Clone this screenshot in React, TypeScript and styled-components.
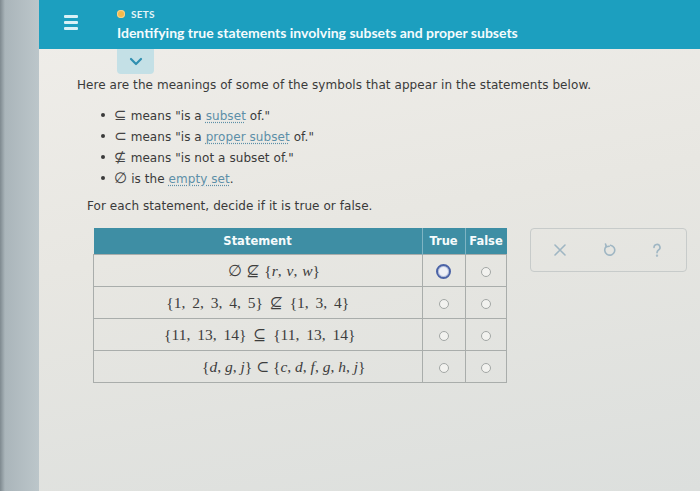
import React from 'react';
import styled, { createGlobalStyle } from 'styled-components';

const GlobalStyle = createGlobalStyle`
  html, body {
    margin: 0;
    padding: 0;
    background: #c3ccd0;
  }
`;

const Page = styled.div`
  display: flex;
  width: 700px;
  height: 491px;
  overflow: hidden;
`;

const Bezel = styled.div`
  width: 39px;
  flex-shrink: 0;
  background: linear-gradient(90deg, #7e898f 0px, #aab5ba 5px, #bcc6ca 100%);
`;

const Screen = styled.div`
  flex: 1;
  display: flex;
  flex-direction: column;
  background: linear-gradient(170deg, #f0eeea 0%, #e8e7e2 45%, #dcdfdd 100%);
`;

const Header = styled.header`
  height: 49px;
  background: #1c9fbf;
  display: flex;
  align-items: flex-start;
  padding-left: 25px;
  gap: 39px;
`;

const Hamburger = styled.div`
  display: flex;
  flex-direction: column;
  gap: 3px;
  margin-top: 15px;

  span {
    display: block;
    width: 14px;
    height: 3px;
    border-radius: 1px;
    background: #d9f1f6;
  }
`;

const TitleBlock = styled.div`
  display: flex;
  flex-direction: column;
  gap: 4px;
  padding-top: 8px;
`;

const Topic = styled.div`
  display: flex;
  align-items: center;
  gap: 6px;
  font-family: Lato, "Open Sans", sans-serif;
  font-weight: 700;
  font-size: 10px;
  letter-spacing: 0.3px;
  color: #e4f4f8;
`;

const Dot = styled.span`
  width: 8px;
  height: 8px;
  border-radius: 50%;
  background: #f5b94a;
  box-shadow: 0 0 0 1px #f7d38f inset;
`;

const Title = styled.h1`
  margin: 0;
  font-family: Lato, "Open Sans", sans-serif;
  font-weight: 700;
  font-size: 14px;
  color: #f4fbfd;
`;

const Content = styled.main`
  padding-left: 38px;
  display: flex;
  flex-direction: column;
  align-items: flex-start;
`;

const ToggleTab = styled.div`
  margin-left: 40px;
  width: 37px;
  height: 25px;
  background: #c4e0e6;
  border-radius: 0 0 4px 4px;
  display: flex;
  align-items: center;
  justify-content: center;
`;

const Text = styled.p<{ $indent?: number; $top: number }>`
  margin: ${(p) => p.$top}px 0 0 ${(p) => p.$indent ?? 0}px;
  font-family: "DejaVu Sans", Verdana, sans-serif;
  font-size: 12px;
  letter-spacing: 0.07px;
  color: #3a3a3a;
`;

const List = styled.ul`
  margin: 12px 0 0 0;
  padding: 0 0 0 24px;
  list-style: none;
  display: flex;
  flex-direction: column;
`;

const Item = styled.li`
  height: 21px;
  display: flex;
  align-items: center;
  font-family: "DejaVu Sans", Verdana, sans-serif;
  font-size: 12px;
  letter-spacing: 0.07px;
  color: #3a3a3a;

  &::before {
    content: '';
    flex-shrink: 0;
    width: 4px;
    height: 4px;
    border-radius: 50%;
    background: #3a3a3a;
    margin-right: 9px;
  }
`;

const Sym = styled.span`
  font-family: "DejaVu Sans", sans-serif;
  font-size: 15px;
  color: #444;
  margin-right: 4px;
`;

const Link = styled.span`
  color: #5d8fa8;
  text-decoration: underline dotted;
  text-underline-offset: 2px;
`;

const Row = styled.div`
  display: flex;
  align-items: flex-start;
  gap: 23px;
  margin-left: 16px;
  margin-top: 15px;
`;

const Table = styled.table`
  border-collapse: collapse;
`;

const Th = styled.th<{ $w: number }>`
  width: ${(p) => p.$w}px;
  height: 26px;
  padding: 0;
  background: #3e8ea4;
  color: #f6fbfc;
  font-family: "DejaVu Sans", Verdana, sans-serif;
  font-size: 11.5px;
  font-weight: 700;
  border-left: 1px solid #7fb4c3;
  &:first-child {
    border-left: none;
  }
`;

const Td = styled.td<{ $pad?: number }>`
  height: 31px;
  padding: 0 0 0 ${(p) => p.$pad ?? 0}px;
  border: 1px solid #a9adab;
  text-align: center;
`;

const MathText = styled.span<{ $spacing: number }>`
  font-family: "Liberation Serif", "DejaVu Serif", serif;
  font-size: 15.5px;
  color: #3d3d3d;
  word-spacing: ${(p) => p.$spacing}px;

  i {
    font-style: italic;
  }
`;

const Radio = styled.span<{ $focused?: boolean }>`
  display: inline-block;
  vertical-align: middle;
  box-sizing: border-box;
  width: ${(p) => (p.$focused ? 15 : 10)}px;
  height: ${(p) => (p.$focused ? 15 : 10)}px;
  border-radius: 50%;
  border: ${(p) => (p.$focused ? '2px solid #4b63a6' : '1px solid #a3a7a5')};
  background: ${(p) => (p.$focused ? '#eef0f6' : '#f2f2ef')};
  box-shadow: ${(p) => (p.$focused ? 'inset 0 0 0 1px #b9c3de' : 'none')};
`;

const Toolbar = styled.div`
  width: 157px;
  height: 44px;
  box-sizing: border-box;
  border: 1px solid #c7cbca;
  border-radius: 4px;
  display: flex;
  align-items: center;
  justify-content: space-between;
  padding: 0 21px;
`;

const Icon = styled.svg`
  width: 16px;
  height: 16px;
  stroke: #9fb6c3;
  fill: none;
  stroke-width: 1.6;
  stroke-linecap: round;
  stroke-linejoin: round;
`;

const rows = [
  { statement: <>∅ ⊈ {'{'}<i>r</i>, <i>v</i>, <i>w</i>{'}'}</>, focused: true, pad: 32, spacing: 1 },
  { statement: <>{'{'}1, 2, 3, 4, 5{'}'} ⊈ {'{'}1, 3, 4{'}'}</>, pad: 0, spacing: 3 },
  { statement: <>{'{'}11, 13, 14{'}'} ⊆ {'{'}11, 13, 14{'}'}</>, pad: 4, spacing: 3 },
  {
    statement: (
      <>
        {'{'}<i>d</i>, <i>g</i>, <i>j</i>{'}'} ⊂ {'{'}<i>c</i>, <i>d</i>, <i>f</i>, <i>g</i>, <i>h</i>, <i>j</i>{'}'}
      </>
    ),
    pad: 52,
    spacing: 0,
  },
];

export default function App() {
  return (
    <>
      <GlobalStyle />
      <Page>
        <Bezel />
        <Screen>
          <Header>
            <Hamburger>
              <span />
              <span />
              <span />
            </Hamburger>
            <TitleBlock>
              <Topic>
                <Dot />
                SETS
              </Topic>
              <Title>Identifying true statements involving subsets and proper subsets</Title>
            </TitleBlock>
          </Header>
          <Content>
            <ToggleTab>
              <svg width="14" height="9" viewBox="0 0 14 9">
                <path d="M2 2 L7 7 L12 2" stroke="#2f8fb0" strokeWidth="2.2" fill="none" strokeLinecap="round" strokeLinejoin="round" />
              </svg>
            </ToggleTab>
            <Text $top={4}>
              Here are the meanings of some of the symbols that appear in the statements below.
            </Text>
            <List>
              <Item>
                <span>
                  <Sym>⊆</Sym>means "is a <Link>subset</Link> of."
                </span>
              </Item>
              <Item>
                <span>
                  <Sym>⊂</Sym>means "is a <Link>proper subset</Link> of."
                </span>
              </Item>
              <Item>
                <span>
                  <Sym>⊈</Sym>means "is not a subset of."
                </span>
              </Item>
              <Item>
                <span>
                  <Sym>∅</Sym>is the <Link>empty set</Link>.
                </span>
              </Item>
            </List>
            <Text $indent={10} $top={11}>
              For each statement, decide if it is true or false.
            </Text>
            <Row>
              <Table>
                <thead>
                  <tr>
                    <Th $w={328}>Statement</Th>
                    <Th $w={42}>True</Th>
                    <Th $w={41}>False</Th>
                  </tr>
                </thead>
                <tbody>
                  {rows.map((r, i) => (
                    <tr key={i}>
                      <Td $pad={r.pad}>
                        <MathText $spacing={r.spacing}>{r.statement}</MathText>
                      </Td>
                      <Td>
                        <Radio $focused={r.focused} />
                      </Td>
                      <Td>
                        <Radio />
                      </Td>
                    </tr>
                  ))}
                </tbody>
              </Table>
              <Toolbar>
                <Icon viewBox="0 0 16 16">
                  <path d="M3 3 L13 13 M13 3 L3 13" />
                </Icon>
                <Icon viewBox="0 0 16 16">
                  <path d="M5.2 4.6 A5 5 0 1 0 9.5 3.2" />
                  <path d="M4.5 2 L5.4 4.8 L8.2 4.2" />
                </Icon>
                <Icon viewBox="0 0 16 16">
                  <path d="M5 5.5 A3 3 0 1 1 9.5 8 C8.4 8.7 8 9.3 8 10.8" />
                  <circle cx="8" cy="13.6" r="0.4" fill="#9fb6c3" />
                </Icon>
              </Toolbar>
            </Row>
          </Content>
        </Screen>
      </Page>
    </>
  );
}
